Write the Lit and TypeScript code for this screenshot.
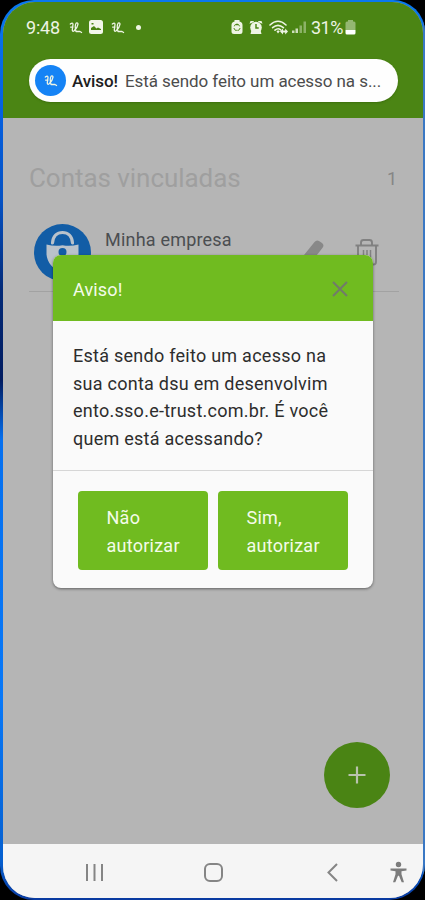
import { LitElement, html, css, svg } from "lit";
import { customElement } from "lit/decorators.js";

const brandStrokes = svg`<path d="M1.300 2.600Q3.800.6 4 2.800L3.300 8.400Q3.400 10.600 5.200 9.200 8.700 5.600 9 2.600 8.800.8 7.200 1.600 5.400 3.600 7 10H11L12.600 11M1.600 5.600H4"/>`;
const brand = html`<svg class="brand" viewBox="0 0 14 12">${brandStrokes}</svg>`;

@customElement("app-root")
class AppRoot extends LitElement {
  static styles = css`
    :host { display: block; width: 425px; height: 900px; font-family: Roboto, sans-serif; }
    * { box-sizing: border-box; }
    svg { display: block; flex: none; }
    .frame {
      width: 425px; height: 900px; padding: 2px 2px 2px 3px; overflow: hidden;
      border-radius: 34px 32px 36px 34px;
      background: linear-gradient(180deg, #0a78ee 0, #0562e4 100px, #0552c4 200px, #032a78 290px, #021c60 380px, #0570f0 440px, #0878f8 700px, #0660d0 860px, #0a3aa0 900px);
      position: relative;
    }
    .backdrop { background: #000; width: 425px; height: 900px; }
    .edge { position: absolute; right: 0; top: 20px; bottom: 20px; width: 2px; background: #3a78c4; }
    .screen {
      position: relative; height: 896px; width: 420px; overflow: hidden;
      border-radius: 32px 31px 34px 32px; background: #b5b5b5;
      display: flex; flex-direction: column;
    }
    .top { height: 116px; background: #4b8514; flex: none; padding: 13px 26px 0 23px; }
    .status { height: 24px; display: flex; align-items: center; color: #eef4e4; font-size: 18px; }
    .time { width: 43px; letter-spacing: -0.2px; }
    .brand { width: 14px; height: 13px; fill: none; stroke: #eef4e4; stroke-width: 1.3; stroke-linecap: round; stroke-linejoin: round; }
    .pic { margin: 0 8px 0 6px; }
    .dot { width: 5px; height: 5px; border-radius: 50%; background: #eef4e4; margin-left: 11px; }
    .right { margin-left: auto; margin-right: 41px; display: flex; align-items: center; }
    .pct { letter-spacing: -0.5px; margin-left: 5px; width: 34px; white-space: nowrap; }
    .toast {
      margin: 20px 0 0 3px; height: 43px; width: 369px; border-radius: 22px; background: #fefefe;
      display: flex; align-items: center; padding-left: 6px; font-size: 17px; color: #4c4c4c; white-space: nowrap;
      box-shadow: 0 1px 2px #2f5c0880;
    }
    .avatar { width: 31px; height: 31px; border-radius: 50%; background: #1583f5; display: flex; align-items: center; justify-content: center; }
    .toast b { font-weight: 500; color: #202020; margin: 0 6px 0 6px; width: 47px; letter-spacing: -.1px; }
    .toast span { letter-spacing: -0.07px; }
    .content { flex: 1; padding: 44px 26px 0; }
    .heading { display: flex; justify-content: space-between; align-items: center; height: 32px; color: #868686; font-size: 18px; }
    h1 { margin: 0; font-size: 26px; font-weight: 400; color: #9f9f9f; letter-spacing: -.05px; white-space: nowrap; }
    .row { margin-top: 28px; height: 70px; width: 370px; border-bottom: 1px solid #a2a2a2; display: flex; padding: 2px 0 0 5px; }
    .name { margin: 5px 0 0 13px; font-size: 18px; line-height: 22px; color: #4b4e51; width: 198px; letter-spacing: .2px; }
    .trash { margin: 14px 0 0 30px; }
    .pencil { margin: 15px 0 0 -6px; }
    .nav { height: 54px; background: #f5f5f5; flex: none; }
    .fab {
      position: absolute; left: 321px; top: 740px; width: 66px; height: 66px; border-radius: 50%;
      background: #4a8414; display: flex; align-items: center; justify-content: center;
    }
    .modal {
      position: absolute; left: 50px; top: 253px; width: 320px; height: 333px; border-radius: 8px;
      background: #fafafa; overflow: hidden; display: flex; flex-direction: column; box-shadow: 0 1px 3px #0007;
    }
    .modal header {
      height: 66px; background: #70bb20; color: #f4fbea; padding: 2px 25px 0 20px; flex: none;
      display: flex; align-items: center; justify-content: space-between; font-size: 18px; letter-spacing: .15px;
    }
    .modal p { margin: 0; padding: 21px 20px 0; height: 149px; font-size: 18px; line-height: 27.6px; color: #2d2d2d; white-space: nowrap; letter-spacing: .26px; }
    .modal footer { flex: 1; border-top: 1px solid #d6d6d6; padding: 20px 25px 0; display: flex; gap: 10px; }
    button {
      width: 130px; height: 79px; border: 0; border-radius: 4px; background: #70bb20; color: #f4fbea;
      font: 18px/28px Roboto, sans-serif; text-align: left; padding: 2px 0 0 28.5px; letter-spacing: .25px;
    }
  `;

  statusIcons() {
    return html`
      <svg width="12" height="16" viewBox="0 0 12 16"><path fill="#eef4e4" d="M3.500 1h5v1.500C10.500 3 11.500 4 11.500 6v6.500q0 2.500-2.500 2.500H3Q.5 15 .5 12.500V6C.5 4 1.500 3 3.500 2.500z"/><path fill="none" stroke="#4b8514" stroke-width="1" d="m3.300 7.300 1-1.800h3.200l1 1.800M2.800 9l1.500 2.300h1.500M9.200 9l-1.500 2.300H6.400M6 4.500v2"/></svg>
      <svg width="14" height="16" viewBox="0 0 14 16" style="margin-left:6px"><g fill="#eef4e4"><circle cx="7" cy="8.500" r="5.800"/><path d="M.5 4.800 1.500 2h3l.5 1zM13.500 4.800 12.500 2h-3L9 3zM1.500 15l1-4h9l1 4z"/></g><path d="M7 5v4h2.700" fill="none" stroke="#4b8514" stroke-width="1.500"/></svg>
      <svg width="19" height="17" viewBox="0 0 19 17" style="margin-left:6px"><g fill="none" stroke="#eef4e4" stroke-width="1.600" stroke-linecap="round"><path d="M1 6Q9 -1.500 17 6M3.600 8.700q5.400-4.800 10.800 0M6 11.200q3-2.600 5.600-.4"/></g><path fill="#eef4e4" d="m7.500 12.300 1.600-1 1.700 1L9 14.500zM11 12.500l3-3v2h2.200v-2l2.800 3-2.800 3v-2H14v2z"/></svg>
      <svg width="14" height="14" viewBox="0 0 14 14" style="margin-left:4px"><g fill="#eef4e4"><path opacity=".8" d="M0 10.500h2.500V13H0zM3.500 8.500H6V13H3.500z"/><path opacity=".4" d="M7.500 5.500H10V13H7.500zM11.500 1.500H14V13h-2.500z"/></g></svg>
      <span class="pct">31%</span>
      <svg width="11" height="15" viewBox="0 0 11 15"><path fill="#eef4e4" opacity=".45" d="M3 0h5v1.500h1q1.500 0 1.500 1.500v7H.5V3Q.5 1.500 2 1.500h1z"/><path fill="#fff" d="M.5 10h10v3q0 1.500-1.500 1.500H2Q.5 14.500.5 13z"/></svg>`;
  }

  render() {
    return html`<div class="backdrop"><div class="frame">
      <div class="edge"></div>
      <div class="screen">
        <div class="top">
          <div class="status">
            <span class="time">9:48</span>${brand}
            <svg class="pic" width="14" height="14" viewBox="0 0 14 14"><rect width="14" height="14" rx="2.500" fill="#f2f6ea"/><path d="M2 10V8l3-2 2.500 2.500L9 7.500l3 1.500V10z" fill="#4b8514"/><rect x="2.500" y="3" width="2" height="1.500" fill="#4b8514"/></svg>
            ${brand}<i class="dot"></i>
            <div class="right">${this.statusIcons()}</div>
          </div>
          <div class="toast"><div class="avatar">${brand}</div><b>Aviso!</b><span>Está sendo feito um acesso na s...</span></div>
        </div>
        <div class="content">
          <div class="heading"><h1>Contas vinculadas</h1><span>1</span></div>
          <div class="row">
            <svg width="58" height="58" viewBox="0 0 58 58"><circle cx="28.500" cy="28.500" r="28.500" fill="#125da6"/><path d="M18.500 19C19 12 23 8.500 28.500 8.500S38 12 38.500 19" fill="none" stroke="#b9c2cb" stroke-width="3.200" stroke-linecap="round"/><path fill="#b9c2cb" d="M12.500 20.500q8 2.200 16 .8 8 1.400 16-.8v10q-1 12-16 19-15-7-16-19z"/><circle cx="28.500" cy="28" r="4" fill="#125da6"/><path fill="#125da6" d="M26.500 30h4l1 8h-6z"/></svg>
            <div class="name">Minha empresa</div>
            <svg class="pencil" width="28" height="28" viewBox="0 0 28 28"><path d="M17.500 3Q19.500 .5 22 2l3 2q2.600 2 .6 4.800L12 26l-9 2 2-9.500z" fill="#888"/></svg>
            <svg class="trash" width="24" height="28" viewBox="0 0 24 28"><g fill="none" stroke="#818181" stroke-width="1.900"><path d="M.5 7.500h23M6 7V4.500Q6 2 8.500 2h6Q17 2 17 4.500V7M3 8v16q0 2.500 2.500 2.500h13q2.500 0 2.500-2.500V8"/><path stroke-width="1.500" d="M8.500 12v10M12 12v10M15.500 12v10"/></g></svg>
          </div>
        </div>
        <div class="nav"><svg width="420" height="54" viewBox="3 844 420 54"><g fill="none" stroke="#858585" stroke-width="2"><path d="M87 864v17M94.500 864v17M102 864v17"/><rect x="205" y="864" width="17" height="17" rx="5"/><path d="m337 864-8.500 8.500L337 881"/></g><g fill="#7c7c7c"><circle cx="398.500" cy="864.500" r="2.700"/><path d="M390.500 868.500h16v2l-5 .8v3l2.500 8h-2.300l-2.700-6.500h-1l-2.700 6.500H393l2.500-8v-3l-5-.8z"/></g></svg></div>
        <div class="fab"><svg width="18" height="18" viewBox="0 0 18 18"><path d="M9 .5v17M.5 9h17" stroke="#b9c3ae" stroke-width="2.200"/></svg></div>
        <div class="modal">
          <header><span>Aviso!</span><svg width="16" height="16" viewBox="0 0 16 16"><path d="m1 1 14 14M15 1 1 15" stroke="#727b6a" stroke-width="2"/></svg></header>
          <p>Está sendo feito um acesso na<br>sua conta dsu em desenvolvim<br>ento.sso.e-trust.com.br. É você<br>quem está acessando?</p>
          <footer><button>Não<br>autorizar</button><button>Sim,<br>autorizar</button></footer>
        </div>
      </div>
    </div></div>`;
  }
}
